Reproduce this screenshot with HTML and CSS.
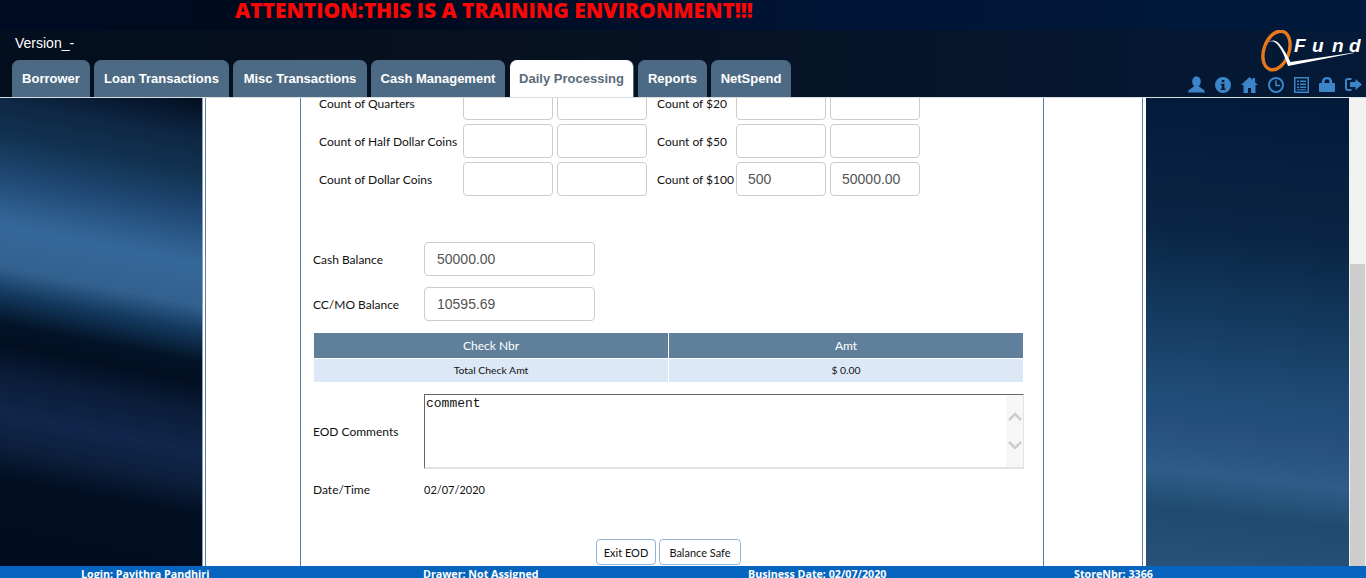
FILE: index.html
```html
<!DOCTYPE html>
<html lang="en">
<head>
<meta charset="utf-8">
<title>QFund</title>
<link rel="stylesheet" href="styles.css">
</head>
<body>
<div class="page">
  <header class="header">
    <div class="banner">ATTENTION:THIS IS A TRAINING ENVIRONMENT!!!</div>
    <div class="head-main">
      <div class="head-left">
        <div class="version">Version_-</div>
        <nav class="tabs">
          <a class="tab">Borrower</a>
          <a class="tab">Loan Transactions</a>
          <a class="tab">Misc Transactions</a>
          <a class="tab">Cash Management</a>
          <a class="tab active">Daily Processing</a>
          <a class="tab">Reports</a>
          <a class="tab">NetSpend</a>
        </nav>
      </div>
      <div class="head-right">
        <svg class="logo" width="100" height="42" viewBox="0 0 100 42">
          <ellipse cx="15.500" cy="20.500" rx="12.500" ry="20" transform="rotate(20 15.500 20.500)" fill="none" stroke="#e8791a" stroke-width="3.400"/>
          <path d="M5 14.500 C9 10 13 10 17 15 C21 20 24 27 27 36 L93 23 L93 22.500 L29.500 32 C26 25 22 18 18 13.500 C14 9 9 9.500 5 14.500Z" fill="#fff"/>
          <text class="logo-text" x="33" y="22">F</text>
          <text class="logo-text" x="51" y="22">u</text>
          <text class="logo-text" x="71" y="22">n</text>
          <text class="logo-text" x="88" y="22">d</text>
        </svg>
        <div class="icons">
          <svg class="icon" width="17" height="17" viewBox="0 0 17 17"><ellipse cx="8.500" cy="5.500" rx="4.300" ry="5.300"/><path d="M0 16.500 C0.500 13 4 12.500 6.500 10 L10.500 10 C13 12.500 16.500 13 17 16.500Z"/></svg>
          <svg class="icon" width="16" height="16" viewBox="0 0 16 16"><path fill-rule="evenodd" d="M8 0a8 8 0 1 0 0 16a8 8 0 1 0 0-16ZM6.800 3h2.600v2.300H6.800ZM5.800 6.800h3.600v4.700h1v1.500H5.800v-1.500h1V8.300h-1Z"/></svg>
          <svg class="icon" width="17" height="16" viewBox="0 0 17 16"><path d="M8.500 0L0 8h2.500v8h4.500v-5h3v5h4.500V8H17L14 5.200V1h-2.500v1.800Z"/></svg>
          <svg class="icon" width="16" height="16" viewBox="0 0 16 16"><circle cx="8" cy="8" r="7" fill="none" stroke="#3c85c9" stroke-width="2"/><path d="M7.200 3.500h1.600v4.300h3.200v1.500H7.200Z"/></svg>
          <svg class="icon" width="15" height="16" viewBox="0 0 15 16"><path fill-rule="evenodd" d="M0 0h15v16H0ZM1.500 1.500v13h12v-13ZM3 3.500h2V5H3ZM6 3.500h6V5H6ZM3 6.500h2V8H3ZM6 6.500h6V8H6ZM3 9.500h2V11H3ZM6 9.500h6V11H6ZM3 12.300h9v1H3Z"/></svg>
          <svg class="icon" width="16" height="15" viewBox="0 0 16 15"><path fill-rule="evenodd" d="M2.800 6V4.500a5.200 4.500 0 0 1 10.400 0V6H15a1 1 0 0 1 1 1v7a1 1 0 0 1-1 1H1a1 1 0 0 1-1-1V7a1 1 0 0 1 1-1ZM5.500 6h5V4.500a2.500 2.200 0 0 0-5 0Z"/></svg>
          <svg class="icon" width="17" height="13" viewBox="0 0 17 13"><path d="M6.500 0H3A3 3 0 0 0 0 3v7a3 3 0 0 0 3 3h3.500v-2H3a1 1 0 0 1-1-1V3a1 1 0 0 1 1-1h3.500Z"/><path d="M10.500 1L17 6.500L10.500 12V9H5V4h5.500Z"/></svg>
        </div>
      </div>
    </div>
  </header>

  <div class="body-row">
    <main class="viewport">
      <div class="side side-left"></div>
      <section class="sheet">
        <div class="sheet-inner">
          <div class="frame">
            <div class="counts">
              <span class="lbl">Count of Quarters</span><span class="field"></span><span class="field"></span>
              <span class="lbl lbl-r">Count of $20</span><span class="field"></span><span class="field"></span>
              <span class="lbl">Count of Half Dollar Coins</span><span class="field"></span><span class="field"></span>
              <span class="lbl lbl-r">Count of $50</span><span class="field"></span><span class="field"></span>
              <span class="lbl">Count of Dollar Coins</span><span class="field"></span><span class="field"></span>
              <span class="lbl lbl-r">Count of $100</span><span class="field">500</span><span class="field">50000.00</span>
            </div>
            <div class="bal-row first"><span class="bal-lbl">Cash Balance</span><span class="field wide">50000.00</span></div>
            <div class="bal-row"><span class="bal-lbl">CC/MO Balance</span><span class="field wide">10595.69</span></div>
            <table class="checks">
              <thead><tr><th>Check Nbr</th><th>Amt</th></tr></thead>
              <tbody><tr><td>Total Check Amt</td><td>$ 0.00</td></tr></tbody>
            </table>
            <div class="comment-row">
              <span class="bal-lbl">EOD Comments</span>
              <div class="comment">
                <div class="comment-text">comment</div>
                <div class="comment-bar">
                  <svg width="14" height="10" viewBox="0 0 14 10"><path d="M1 8L7 2l6 6" fill="none" stroke="#cdcdcd" stroke-width="2.500"/></svg>
                  <svg width="14" height="10" viewBox="0 0 14 10"><path d="M1 2l6 6 6-6" fill="none" stroke="#cdcdcd" stroke-width="2.500"/></svg>
                </div>
              </div>
            </div>
            <div class="date-row"><span class="bal-lbl">Date/Time</span><span class="date">02/07/2020</span></div>
            <div class="actions"><button class="btn btn-exit">Exit EOD</button><button class="btn btn-safe">Balance Safe</button></div>
          </div>
        </div>
      </section>
      <div class="side side-right"></div>
    </main>
    <div class="scrollbar"><div class="thumb"></div></div>
  </div>

  <footer class="footer">
    <span class="f1">Login: Pavithra Pandhiri</span>
    <span class="f2">Drawer: Not Assigned</span>
    <span class="f3">Business Date: 02/07/2020</span>
    <span class="f4">StoreNbr: 3366</span>
  </footer>
</div>
</body>
</html>
```
FILE: styles.css
```css
* { box-sizing: border-box; }
html, body { margin: 0; padding: 0; height: 100%; overflow: hidden; }
body { font-family: "Liberation Sans", Arial, sans-serif; background: #fff; }
.page { width: 1366px; height: 578px; display: flex; flex-direction: column; overflow: hidden; }

.header { height: 98px; flex: none; background: linear-gradient(90deg, #030e1f 0%, #07111f 35%, #06152b 70%, #041a38 100%); border-bottom: 1px solid #d8dde2; }
.banner { height: 30px; background: linear-gradient(90deg, #000c22 0%, #000a1e 30%, #001435 60%, #001a3b 100%); color: #f90707; font-family: "Open Sans", sans-serif; font-weight: 800; font-size: 21px; letter-spacing: -0.05px; line-height: 20px; padding-left: 235px; }
.head-main { display: flex; justify-content: space-between; height: 67px; }
.head-left { display: flex; flex-direction: column; }
.version { color: #fff; font-size: 14px; line-height: 16px; padding: 5px 0 0 15px; height: 30px; }
.tabs { display: grid; grid-template-columns: 78px 135px 134px 134px 123px 69px 80px; column-gap: 4px; padding-left: 12px; }
.tab { height: 37px; background: #4d6a84; color: #fff; font-weight: 700; font-size: 13px; line-height: 36px; text-align: center; white-space: nowrap; border-radius: 7px 7px 0 0; border: 1px solid #4d6a84; border-bottom: 0; }
.tab.active { background: #fff; color: #5a6b7a; border-color: #fff; box-shadow: 1px 0 0 #4d6a84; }
.tabs .tab:nth-child(n+5) { transform: none; }
.tab.active { margin-left: 1px; margin-right: -1px; }
.tab:nth-child(n+6) { margin-left: 2px; margin-right: -2px; }

.head-right { width: 190px; display: flex; flex-direction: column; align-items: flex-end; padding-right: 5px; }
.logo { display: block; }
.logo-text { fill: #fff; font-family: "Liberation Sans", sans-serif; font-style: italic; font-weight: 700; font-size: 19px; }
.icons { display: flex; gap: 10px; align-items: center; margin-top: 4px; margin-right: -1px; height: 17px; }
.icon { fill: #3c85c9; display: block; }

.body-row { flex: 1; min-height: 0; display: flex; }
.viewport { flex: 1; min-width: 0; display: grid; grid-template-columns: 202px 944px 203px; }
.side-left { background: linear-gradient(191deg, #020e20 0%, #0e2744 8%, #123250 15%, #1d4570 22%, #2f6090 30%, #35689a 33%, #32618f 41%, #143a60 46%, #031428 52%, #020f22 56%, #0a1c38 62%, #10264a 70%, #0c1f3c 76%, #020f22 82.500%, #010c1e 100%); }
.side-right { background: linear-gradient(186deg, #031a3a 0%, #0a2543 30%, #143a60 48%, #1e4a75 62%, #265180 72%, #2f5c88 80%, #1f4b70 88%, #28527a 100%); }
.sheet { background: #fff; overflow: hidden; border-left: 1px solid #8da3b8; padding: 0 3px 0 2px; }
.sheet-inner { height: 100%; border-left: 1px solid #5f7f9a; border-right: 1px solid #5f7f9a; overflow: hidden; }
.frame { margin-left: 94px; width: 744px; height: 100%; border-left: 1px solid #5f7f9a; border-right: 1px solid #5f7f9a; overflow: hidden; font-family: "Lato", sans-serif; font-size: 12px; color: #111; padding-left: 13px; }

.counts { display: grid; grid-template-columns: 144px 90px 90px 93px 90px 90px; grid-auto-rows: 34px; row-gap: 4px; margin: -12px 0 0 5px; align-items: center; }
.counts .field { padding-left: 11px; }
.counts .field:nth-child(3n) { margin-left: 4px; }
.lbl { white-space: nowrap; }
.lbl-r { padding-left: 14px; }
.field { display: block; width: 90px; height: 34px; border: 1px solid #ccc; border-radius: 4px; background: #fff; color: #555; font-family: "Liberation Sans", sans-serif; font-size: 14px; line-height: 32px; padding-left: 12px; }
.wide { width: 171px; }
.bal-row { display: flex; align-items: center; height: 34px; margin-top: 11px; }
.bal-row.first { margin-top: 46px; }
.bal-lbl { width: 111px; margin-left: -1px; flex: none; }
.checks { width: 709px; margin-top: 12px; border-collapse: collapse; table-layout: fixed; text-align: center; }
.checks th { background: #5f7f9a; color: #fff; font-weight: 400; font-size: 12px; height: 25px; padding: 0; border-right: 1px solid #fff; }
.checks td { background: #dce8f5; font-size: 10.400px; height: 24px; padding: 0; border-top: 1px solid #fff; border-right: 1px solid #fff; }
.checks th:last-child, .checks td:last-child { border-right: 0; }
.comment-row { display: flex; align-items: center; margin-top: 12px; }
.comment { width: 600px; height: 75px; border: 1px solid #666; border-right: 1px solid #e3e3e3; border-bottom: 2px solid #e3e3e3; display: flex; justify-content: space-between; }
.comment-text { font-family: "Liberation Mono", monospace; font-size: 13px; line-height: 15px; padding: 1px 0 0 1px; color: #111; }
.comment-bar { width: 17px; background: #f7f7f7; display: flex; flex-direction: column; align-items: center; justify-content: center; gap: 18px; }
.date-row { display: flex; align-items: center; margin-top: 12px; height: 17px; }
.date { font-size: 11px; }
.actions { display: flex; justify-content: center; gap: 3px; margin-top: 41px; width: 709px; }
.btn { height: 26px; background: #fff; border: 1px solid #8fb6d8; border-radius: 4px; font-family: "Lato", sans-serif; font-size: 11px; color: #111; padding: 0; }
.btn-exit { width: 60px; }
.btn-safe { width: 82px; }

.scrollbar { width: 17px; flex: none; background: #f1f1f1; padding: 166px 1px 0 1px; }
.thumb { height: 100%; background: #cdcdcd; }

.footer { height: 12px; flex: none; background: #0565be; color: #fff; font-family: "Open Sans", sans-serif; font-weight: 700; font-size: 10.700px; line-height: 17px; position: relative; overflow: hidden; }
.footer span { position: absolute; top: 0; white-space: nowrap; }
.f1 { left: 81px; }
.f2 { left: 423px; }
.f3 { left: 748px; }
.f4 { left: 1074px; }
```
